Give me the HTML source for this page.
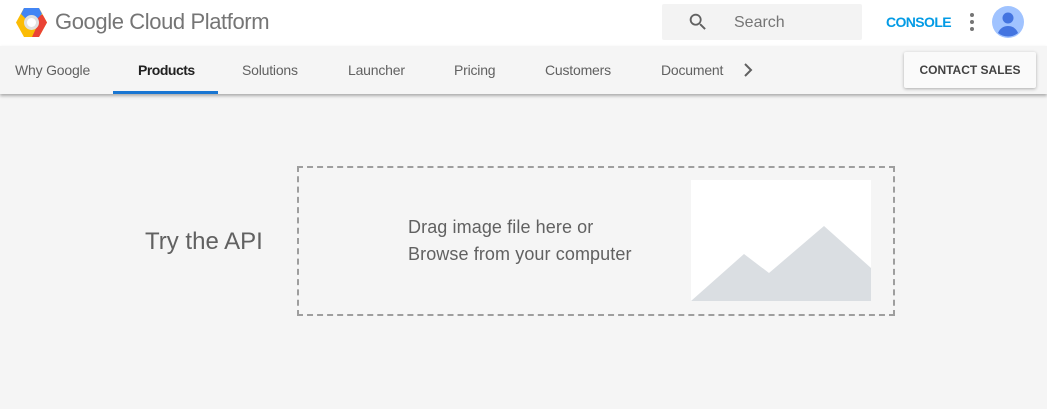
<!DOCTYPE html>
<html><head><meta charset="utf-8"><style>
*{margin:0;padding:0;box-sizing:border-box}
body{width:1047px;height:409px;background:#f5f5f5;font-family:"Liberation Sans",Arial,sans-serif;overflow:hidden;position:relative}
.top{position:absolute;left:0;top:0;width:1047px;height:46px;background:#fff}
.brand{position:absolute;left:55px;top:9px;font-size:22px;color:#757575;letter-spacing:-0.4px}
.search{position:absolute;left:662px;top:4px;width:200px;height:36px;background:#f3f3f3;border-radius:2px}
.search span{position:absolute;left:72px;top:10px;font-size:16px;color:#757575}
.console{position:absolute;left:886px;top:14px;font-size:14px;color:#039be5;font-weight:bold;letter-spacing:-0.6px}
.nav{position:absolute;left:0;top:46px;width:1047px;height:48px;background:#f5f5f5;box-shadow:0 2px 3px rgba(0,0,0,.3)}
.nav a{position:absolute;top:16px;font-size:14px;color:#616161;letter-spacing:-0.2px}
.act{position:absolute;left:113px;top:45px;width:105px;height:3px;background:#1976d2}
.cs{position:absolute;left:904px;top:52px;width:132px;height:36px;background:#fafafa;box-shadow:0 1px 3px rgba(0,0,0,.3);border-radius:2px;font-size:12px;font-weight:bold;color:#424242;text-align:center;line-height:36px}
.try{position:absolute;left:145px;top:228px;font-size:24px;color:#616161}
.box{position:absolute;left:297px;top:166px;width:598px;height:150px;border:2px dashed #9e9e9e}
.txt{position:absolute;left:408px;top:214px;font-size:18px;color:#616161;line-height:27px;letter-spacing:0.1px}
</style></head><body>
<div class="top">
<svg style="position:absolute;left:16px;top:8px" width="31" height="29" viewBox="0 0 31 29">
<polygon points="8,0 23,0 31,14.5 23,29 8,29 0,14.5" fill="#fbbc05"/>
<polygon points="23,0 31,14.5 23,29 16,29 22,16 19,7 27,7" fill="#ea4335"/>
<polygon points="8,0 23,0 26,6 21,11 10,11 5,6" fill="#4285f4"/>
<circle cx="15.5" cy="14.5" r="7.5" fill="#e0e0e0"/>
<circle cx="15.5" cy="14.5" r="4.5" fill="#fff"/>
</svg>
<div class="brand">Google Cloud Platform</div>
<div class="search"><svg style="position:absolute;left:25px;top:7px" width="22" height="22" viewBox="0 0 24 24"><path d="M15.5 14h-.8l-.3-.3A6.5 6.5 0 1 0 9.5 16a6.5 6.5 0 0 0 4.2-1.6l.3.3v.8l5 5 1.5-1.5-5-5zm-6 0a4.5 4.5 0 1 1 0-9 4.5 4.5 0 0 1 0 9z" fill="#616161"/></svg><span>Search</span></div>
<div class="console">CONSOLE</div>
<svg style="position:absolute;left:968px;top:13px" width="8" height="18"><circle cx="4" cy="2" r="2" fill="#757575"/><circle cx="4" cy="9" r="2" fill="#757575"/><circle cx="4" cy="16" r="2" fill="#757575"/></svg>
<svg style="position:absolute;left:992px;top:6px" width="32" height="32" viewBox="0 0 32 32"><circle cx="16" cy="16" r="16" fill="#a0c3ff"/><circle cx="16" cy="12" r="5.5" fill="#4374e0"/><path d="M6 27c2-5 6-7 10-7s8 2 10 7a16 16 0 0 1-20 0z" fill="#4374e0"/></svg>
</div>
<div class="nav">
<a style="left:15px">Why Google</a>
<a style="left:138px;color:#212121;font-weight:bold;letter-spacing:-0.5px">Products</a>
<a style="left:242px">Solutions</a>
<a style="left:348px">Launcher</a>
<a style="left:454px">Pricing</a>
<a style="left:545px">Customers</a>
<a style="left:661px">Document</a>
<svg style="position:absolute;left:742px;top:17px" width="12" height="14" viewBox="0 0 12 14"><path d="M3 1l6 6-6 6" stroke="#616161" stroke-width="2" fill="none"/></svg>
<div class="act"></div>
</div>
<div class="cs">CONTACT SALES</div>
<div class="try">Try the API</div>
<div class="box"></div>
<div class="txt">Drag image file here or<br>Browse from your computer</div>
<svg style="position:absolute;left:691px;top:180px" width="180" height="121" viewBox="0 0 180 121"><rect width="180" height="121" fill="#fff"/><polygon points="0,121 53,74 78,93 133,46 180,88 180,121" fill="#dadee2"/></svg>
</body></html>
